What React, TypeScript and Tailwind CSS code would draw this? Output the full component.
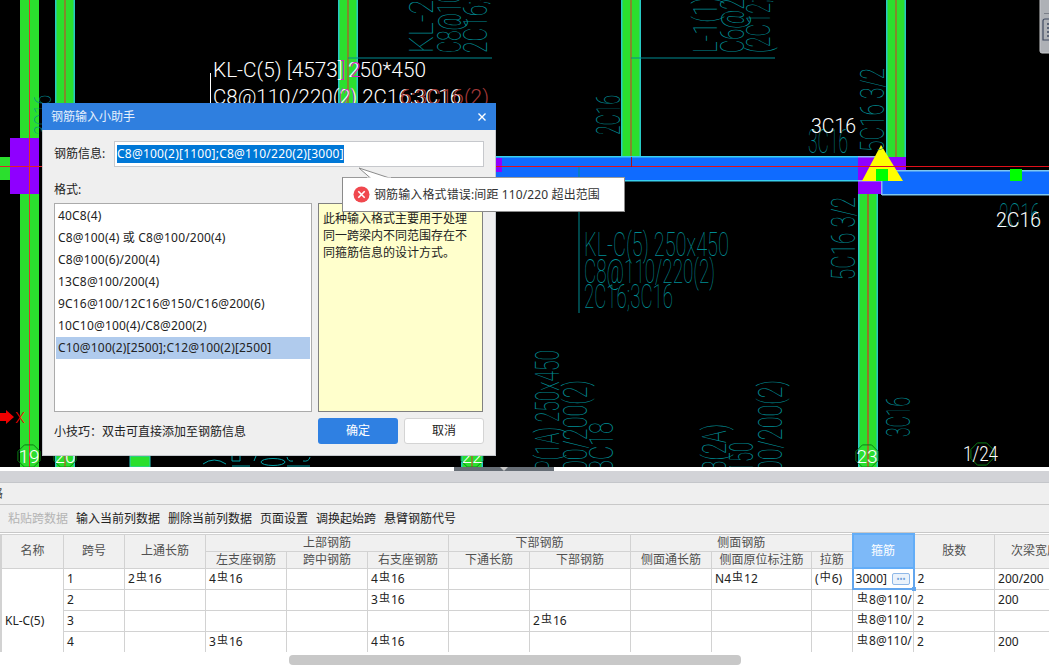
import React from "react";

const TEAL = "#008b92";
const CAD = "Roboto, 'Liberation Sans', sans-serif";

function H({ x, y, len, size = 33, fill = TEAL, w = 100, children }: { x: number; y: number; len: number; size?: number; fill?: string; w?: number; children: string }) {
  return (
    <text x={x} y={y} textLength={len} lengthAdjust="spacingAndGlyphs" fontSize={size} fill={fill} fontFamily={CAD} fontWeight={w}>
      {children}
    </text>
  );
}

function V({ x, y, len, size = 34, fill = TEAL, children }: { x: number; y: number; len: number; size?: number; fill?: string; children: string }) {
  return (
    <text transform={`translate(${x} ${y}) rotate(-90)`} textLength={len} lengthAdjust="spacingAndGlyphs" fontSize={size} fill={fill} fontFamily={CAD} fontWeight={100}>
      {children}
    </text>
  );
}

function Col({ x, y, w, h, edge = "#27c9c4", line = "#d9342a" }: { x: number; y: number; w: number; h: number; edge?: string; line?: string }) {
  return (
    <g>
      <rect x={x} y={y} width={w} height={h} fill="#2bdf2e" />
      <rect x={x} y={y} width={1.5} height={h} fill={edge} />
      <rect x={x + w - 1.5} y={y} width={1.5} height={h} fill={edge} />
      <rect x={x + w / 2 - 0.5} y={y} width={1} height={h} fill={line} />
    </g>
  );
}

function Hex({ cx, cy, label, r = 12, stroke = "#0a7f14" }: { cx: number; cy: number; label: string; r?: number; stroke?: string }) {
  const pts = Array.from({ length: 8 }, (_, i) => {
    const a = (Math.PI / 4) * i + Math.PI / 8;
    return `${cx + r * Math.cos(a)},${cy + r * Math.sin(a)}`;
  }).join(" ");
  return (
    <g>
      <polygon points={pts} fill="none" stroke={stroke} strokeWidth={1} />
      <text x={cx} y={cy + 7} textAnchor="middle" fontSize={19} fill="#fff" fontFamily={CAD} fontWeight={300}>
        {label}
      </text>
    </g>
  );
}

function CadDrawing() {
  return (
    <svg width={1049} height={467} viewBox="0 0 1049 467" className="block">
      <rect width={1049} height={467} fill="#000" />
      {/* columns */}
      <Col x={20} y={0} w={19} h={467} edge="#2bdf2e" />
      <Col x={55} y={0} w={20} h={467} />
      <Col x={338} y={0} w={20} h={103} />
      <Col x={621} y={0} w={20} h={157} />
      <Col x={886} y={0} w={20} h={157} />
      <Col x={858} y={194} w={20} h={273} line="#ff1020" />
      <rect x={130} y={456} width={20} height={11} fill="#2bdf2e" stroke="#27c9c4" strokeWidth={1} />
      <Col x={461} y={456} w={22} h={11} />

      {/* left stub and block */}
      <rect x={0} y={157} width={12} height={23} fill="#2bdf2e" />
      <rect x={10} y={138} width={29} height={56} fill="#8f00ff" />
      <rect x={0} y={166} width={42} height={1} fill="#e0202a" />
      <rect x={29} y={0} width={1} height={467} fill="#d9342a" />

      {/* beams */}
      <rect x={496} y={157} width={362} height={24} fill="#0f6bff" />
      <rect x={496} y={156} width={362} height={1.5} fill="#39d0f0" />
      <rect x={496} y={180} width={362} height={1.5} fill="#39d0f0" />
      <rect x={496} y={158} width={6} height={14} fill="#8f00ff" />
      <rect x={858} y={157} width={48} height={37} fill="#8f00ff" />
      <rect x={882} y={171} width={167} height={24} fill="#0f6bff" />
      <rect x={882} y={170} width={167} height={1.5} fill="#7fc8f0" />
      <rect x={882} y={194} width={167} height={1.5} fill="#7fc8f0" />
      <rect x={881} y={157} width={1.5} height={38} fill="#8fb4f0" />
      <rect x={858} y={156} width={24} height={1.5} fill="#8fb4f0" />
      <rect x={858} y={180} width={24} height={1.5} fill="#8fb4f0" />
      <polygon points="881,145 862,181 903,181" fill="#ffff00" />
      <rect x={876} y={169} width={12} height={12} fill="#00ff00" />
      <rect x={1010} y={169} width={12} height={12} fill="#00ff00" />
      <rect x={496} y={166} width={553} height={1} fill="#e0101a" />
      <rect x={631} y={157} width={1} height={10} fill="#a01020" />
      <rect x={578.5} y={167} width={1} height={146} fill={TEAL} />

      {/* leader lines */}
      <rect x={348} y={57.5} width={144} height={1} fill={TEAL} />
      <rect x={631} y={57.5} width={144} height={1} fill={TEAL} />
      <rect x={210} y={73} width={1} height={30} fill="#fff" />

      {/* vertical labels */}
      <V x={433} y={53} len={84}>KL-2(1)</V>
      <V x={461} y={53} len={130}>C8@100/200(2)</V>
      <V x={487} y={53} len={100}>2C16;3C16</V>
      <V x={717} y={53} len={56}>L-1(1)</V>
      <V x={744} y={53} len={100}>C6@200(2)</V>
      <V x={770} y={53} len={104}>(2C12;2C12)</V>
      <V x={620} y={135} len={40}>2C16</V>
      <V x={884} y={152} len={84}>5C16 3/2</V>
      <V x={855} y={280} len={83}>5C16 3/2</V>
      <V x={910} y={437} len={40}>3C16</V>
      <V x={51} y={135} len={40} size={24}>3C16</V>
      <V x={559} y={472} len={122}>P(1A) 250x450</V>
      <V x={587} y={472} len={92}>00/200(2)</V>
      <V x={613} y={472} len={50}>3C18</V>
      <V x={726} y={472} len={48}>3(2A)</V>
      <V x={753} y={472} len={30}>150</V>
      <V x={782} y={472} len={92}>00/200(2)</V>

      {/* horizontal labels */}
      <H x={808} y={153} len={40}>3C16</H>
      <H x={811} y={133} len={45} size={21} fill="#fff" w={300}>3C16</H>
      <H x={999} y={227} len={41}>2C16</H>
      <H x={996} y={227} len={45} size={21} fill="#fff" w={300}>2C16</H>
      <H x={584} y={256} len={145}>KL-C(5) 250x450</H>
      <H x={584} y={283} len={131}>C8@110/220(2)</H>
      <H x={584} y={308} len={89}>2C16;3C16</H>

      <H x={213} y={77} len={213} size={21} fill="#fff" w={300}>KL-C(5) [4573] 250*450</H>
      <H x={213} y={104} len={248} size={21} fill="#fff" w={300}>C8@110/220(2) 2C16;3C16</H>
      <H x={400} y={104} len={89} size={21} fill="#a63a3a" w={300}>6;3C16(2)</H>
      <H x={341} y={77} len={20} size={21} fill="#d422c8" w={300}>] 2</H>
      <H x={339} y={104} len={16} size={21} fill="#d422c8" w={300}>(2)</H>

      {/* axis mark */}
      <polygon points="0,413 6,413 6,410 14,417 6,424 6,421 0,421" fill="#f00000" />
      <H x={15} y={423} len={10} size={15} fill="#f00000" w={300}>X</H>

      {/* axis numbers */}
      <Hex cx={29} cy={456} label="19" />
      <Hex cx={65} cy={456} label="20" />
      <Hex cx={472} cy={456} label="22" />
      <Hex cx={867} cy={456} label="23" />
      <Hex cx={982} cy={454} label="" />
      <H x={963} y={461} len={35} size={20} fill="#fff" w={300}>1/24</H>

      {/* clipped drawing fragments */}
      <g fill="none" stroke="#00a0a6" strokeWidth={1}>
        <path d="M203 464 Q214 456 226 464" />
        <path d="M232 456 V461 H240 V456" />
        <path d="M254 461 L256 456" />
        <ellipse cx={273} cy={462} rx={12} ry={3.5} />
        <path d="M287 457 Q288 462 293 461 M303 461 Q309 462 310 457" />
        <path d="M232 466 H250 M287 466 H310" />
      </g>

      {/* side tab */}
      <rect x={1040} y={-2} width={12} height={55} rx={2} fill="#aeb1b6" stroke="#c8cacd" />
      <rect x={1044} y={13} width={5} height={1} fill="#7a7f88" />
      <path d="M1049 19 H1045 Q1043 19 1043 21 V40 H1049" fill="none" stroke="#3f4a60" strokeWidth={1.2} />
      <path d="M1047 24 H1049 M1047 28 H1049 M1047 32 H1049 M1047 36 H1049" stroke="#3f4a60" strokeWidth={1.5} />
    </svg>
  );
}

function Rebar({ n, tail, mid = "虫" }: { n?: string; tail: string; mid?: string }) {
  return (
    <span className="inline-flex items-center whitespace-nowrap">
      {n && <span>{n}</span>}
      <span className="text-[11px] leading-none -translate-y-[2px] mx-[1px]">{mid}</span>
      <span>{tail}</span>
    </span>
  );
}

const bd = "border border-[#d2d2d2]";
const headCell = `${bd} bg-[#f0f0f0] text-[#505050] font-normal p-0 text-center text-[12px] leading-none overflow-hidden whitespace-nowrap`;
const cell = `${bd} bg-white text-[#222] p-0 pl-[3px] text-[12px] leading-none overflow-hidden whitespace-nowrap`;

const widths = [1, 62, 61, 81, 81, 81, 81, 81, 101, 81, 100, 41, 61, 81, 81];

const stirrup = <Rebar tail="8@110/" />;

const rows: { no: string; top?: React.ReactNode; left?: React.ReactNode; right?: React.ReactNode; bot?: React.ReactNode; side?: React.ReactNode; tie?: React.ReactNode; beam?: string }[] = [
  { no: "1", top: <Rebar n="2" tail="16" />, left: <Rebar n="4" tail="16" />, right: <Rebar n="4" tail="16" />, side: <Rebar n="N4" tail="12" />, tie: <Rebar n="(" tail="6)" mid="中" />, beam: "200/200" },
  { no: "2", right: <Rebar n="3" tail="16" />, beam: "200" },
  { no: "3" },
  { no: "4", left: <Rebar n="3" tail="16" />, right: <Rebar n="4" tail="16" />, beam: "200" },
  { no: "5", right: <Rebar n="4" tail="16" />, side: <Rebar n="N4" tail="12" />, tie: <Rebar n="(" tail="6)" mid="中" /> },
];

function BeamTable() {
  return (
    <div className="h-[123px] overflow-hidden bg-white">
      <table className="table-fixed border-collapse w-[1132px]">
        <colgroup>
          {widths.map((w, i) => (
            <col key={i} style={{ width: w }} />
          ))}
        </colgroup>
        <thead>
          <tr className="h-[17px]">
            <th rowSpan={2} className={headCell}></th>
            <th rowSpan={2} className={headCell}>名称</th>
            <th rowSpan={2} className={headCell}>跨号</th>
            <th rowSpan={2} className={headCell}>上通长筋</th>
            <th colSpan={3} className={headCell}>上部钢筋</th>
            <th colSpan={2} className={headCell}>下部钢筋</th>
            <th colSpan={3} className={headCell}>侧面钢筋</th>
            <th rowSpan={2} className="border-2 border-[#63adf7] bg-[#7db9f8] text-white font-normal p-0 text-center text-[12px] leading-none">箍筋</th>
            <th rowSpan={2} className={headCell}>肢数</th>
            <th rowSpan={2} className={headCell}>次梁宽度</th>
          </tr>
          <tr className="h-[17px]">
            <th className={headCell}>左支座钢筋</th>
            <th className={headCell}>跨中钢筋</th>
            <th className={headCell}>右支座钢筋</th>
            <th className={headCell}>下通长筋</th>
            <th className={headCell}>下部钢筋</th>
            <th className={headCell}>侧面通长筋</th>
            <th className={headCell}>侧面原位标注筋</th>
            <th className={headCell}>拉筋</th>
          </tr>
        </thead>
        <tbody>
          {rows.map((r, i) => (
            <tr key={r.no} className="h-[21px]">
              {i === 0 && <td rowSpan={5} className={cell}></td>}
              {i === 0 && <td rowSpan={5} className={cell}>KL-C(5)</td>}
              <td className={cell}>{r.no}</td>
              <td className={cell}>{r.top}</td>
              <td className={cell}>{r.left}</td>
              <td className={cell}></td>
              <td className={cell}>{r.right}</td>
              <td className={cell}>{r.bot}</td>
              <td className={cell}>{r.no === "3" ? <Rebar n="2" tail="16" /> : null}</td>
              <td className={cell}></td>
              <td className={cell}>{r.side}</td>
              <td className={cell}>{r.tie}</td>
              {i === 0 ? (
                <td className="relative border-2 border-[#63a6ee] bg-white p-0 pl-[2px] text-[12px] leading-none text-[#222]">
                  <span className="flex items-center gap-[5px]">
                    <span>3000]</span>
                    <span className="flex h-[12px] w-[18px] items-center justify-center rounded-[2px] border border-[#8fb8e8] bg-[#eaf2fb] text-[8px] leading-none text-[#6f9fd8]">•••</span>
                  </span>
                  <span className="absolute -bottom-[3px] -right-[3px] h-[4px] w-[4px] bg-[#63a6ee]" />
                </td>
              ) : (
                <td className={cell}>{stirrup}</td>
              )}
              <td className={cell}>2</td>
              <td className={cell}>{r.beam}</td>
              <td className={cell}></td>
            </tr>
          ))}
        </tbody>
      </table>
    </div>
  );
}

const formats = [
  "40C8(4)",
  "C8@100(4) 或 C8@100/200(4)",
  "C8@100(6)/200(4)",
  "13C8@100/200(4)",
  "9C16@100/12C16@150/C16@200(6)",
  "10C10@100(4)/C8@200(2)",
  "C10@100(2)[2500];C12@100(2)[2500]",
];

function Dialog() {
  return (
    <div className="absolute left-[42px] top-[103px] flex h-[353px] w-[454px] flex-col">
      <div className="flex h-[27px] shrink-0 items-center justify-between bg-[#2f7fdf] pl-[9px] pr-[9px] text-[12px] text-[#e6f0fc]">
        <span>钢筋输入小助手</span>
        <svg width="10" height="10" viewBox="0 0 10 10">
          <path d="M1.5 1.5 L8.5 8.5 M8.5 1.5 L1.5 8.5" stroke="#fff" strokeWidth="1.4" />
        </svg>
      </div>
      <div className="flex flex-1 flex-col border-x border-b border-[#c4c8cd] bg-[#efefef] pl-[11px] pr-[11px] pt-[11px] text-[12px] text-[#222]">
        <div className="flex h-[26px] items-center">
          <span className="w-[60px] shrink-0">钢筋信息:</span>
          <div className="flex h-[26px] w-[370px] items-center border border-[#c6c8cc] bg-white pl-[2px]">
            <span className="bg-[#0078d7] text-white leading-[18px] tracking-[0.23px]">C8@100(2)[1100];C8@110/220(2)[3000]</span>
          </div>
        </div>
        <div className="mt-[15px] h-[16px] leading-[16px]">格式:</div>
        <div className="mt-[5px] flex h-[209px] gap-[6px]">
          <ul className="w-[258px] border border-[#ababab] bg-white p-px pt-[1px] tracking-[0.18px]">
            {formats.map((f, i) => (
              <li key={f} className={`flex h-[22px] items-center pl-[2px] ${i === formats.length - 1 ? "bg-[#b0cbed]" : ""}`}>
                {f}
              </li>
            ))}
          </ul>
          <div className="w-[165px] border border-[#808080] bg-[#ffffcc] px-[4px] pt-[6px] leading-[17px]">
            此种输入格式主要用于处理同一跨梁内不同范围存在不同箍筋信息的设计方式。
          </div>
        </div>
        <div className="mt-[6px] flex h-[26px] items-center justify-between">
          <span className="translate-y-[1px]">小技巧：双击可直接添加至钢筋信息</span>
          <div className="flex gap-[6px]">
            <button className="h-[26px] w-[80px] rounded-[3px] bg-[#2f80e2] text-white">确定</button>
            <button className="h-[26px] w-[80px] rounded-[3px] border border-[#d4d4d4] bg-white text-[#222]">取消</button>
          </div>
        </div>
      </div>
    </div>
  );
}

function ErrorTip() {
  return (
    <div className="absolute left-[342px] top-[177px] flex h-[35px] w-[283px] items-center gap-[4px] border border-[#8a8a8a] border-t-[#9a9a9a] bg-white pl-[10px] text-[12px] text-[#333]">
      <svg className="absolute -top-[11px] left-[14px]" width="36" height="12" viewBox="0 0 36 12">
        <polygon points="14,11.5 2,1 34,11.5" fill="#fff" stroke="#8a8a8a" />
        <rect x="10" y="10.5" width="24" height="2" fill="#fff" />
      </svg>
      <svg width="17" height="17" viewBox="0 0 17 17" className="shrink-0">
        <circle cx="8.5" cy="8.5" r="8" fill="#f0484e" />
        <path d="M5.3 5.3 L11.7 11.7 M11.7 5.3 L5.3 11.7" stroke="#fff" strokeWidth="1.6" />
      </svg>
      <span className="whitespace-nowrap tracking-[0.12px]">钢筋输入格式错误:间距 110/220 超出范围</span>
    </div>
  );
}

export default function App() {
  return (
    <div className="relative flex h-[665px] w-[1049px] flex-col overflow-hidden bg-white font-['Noto_Sans','Noto_Sans_CJK_SC',sans-serif]">
      <div className="h-[467px] shrink-0">
        <CadDrawing />
      </div>
      <div className="relative h-[4px] shrink-0 bg-white">
        <div className="absolute left-[454px] top-0 flex h-[4px] w-[100px] justify-center bg-[#676e76]">
          <div className="h-0 w-0 border-x-[4px] border-t-[4px] border-x-transparent border-t-[#c8c8c8]" />
        </div>
      </div>
      <div className="h-[12px] shrink-0 border-b border-[#c4c6ca] bg-[#d2d3d7]" />
      <div className="h-[22px] shrink-0 overflow-hidden border-b border-[#c8c8c8] bg-[#efefef] pl-0 text-[12px] leading-[21px] text-[#444]">
        <span className="-ml-[9px] inline-block">格</span>
      </div>
      <div className="flex h-[28px] shrink-0 items-center gap-[8px] border-b border-[#c8c8c8] bg-[#efefef] pl-[8px] text-[12px] text-[#222]">
        <span className="text-[#b4b4b4]">粘贴跨数据</span>
        <span>输入当前列数据</span>
        <span>删除当前列数据</span>
        <span>页面设置</span>
        <span>调换起始跨</span>
        <span>悬臂钢筋代号</span>
      </div>
      <BeamTable />
      <div className="flex-1 bg-white pl-[289px] pt-[3px]">
        <div className="h-[10px] w-[452px] rounded-[4px] bg-[#c8c8c8]" />
      </div>
      <Dialog />
      <ErrorTip />
    </div>
  );
}
